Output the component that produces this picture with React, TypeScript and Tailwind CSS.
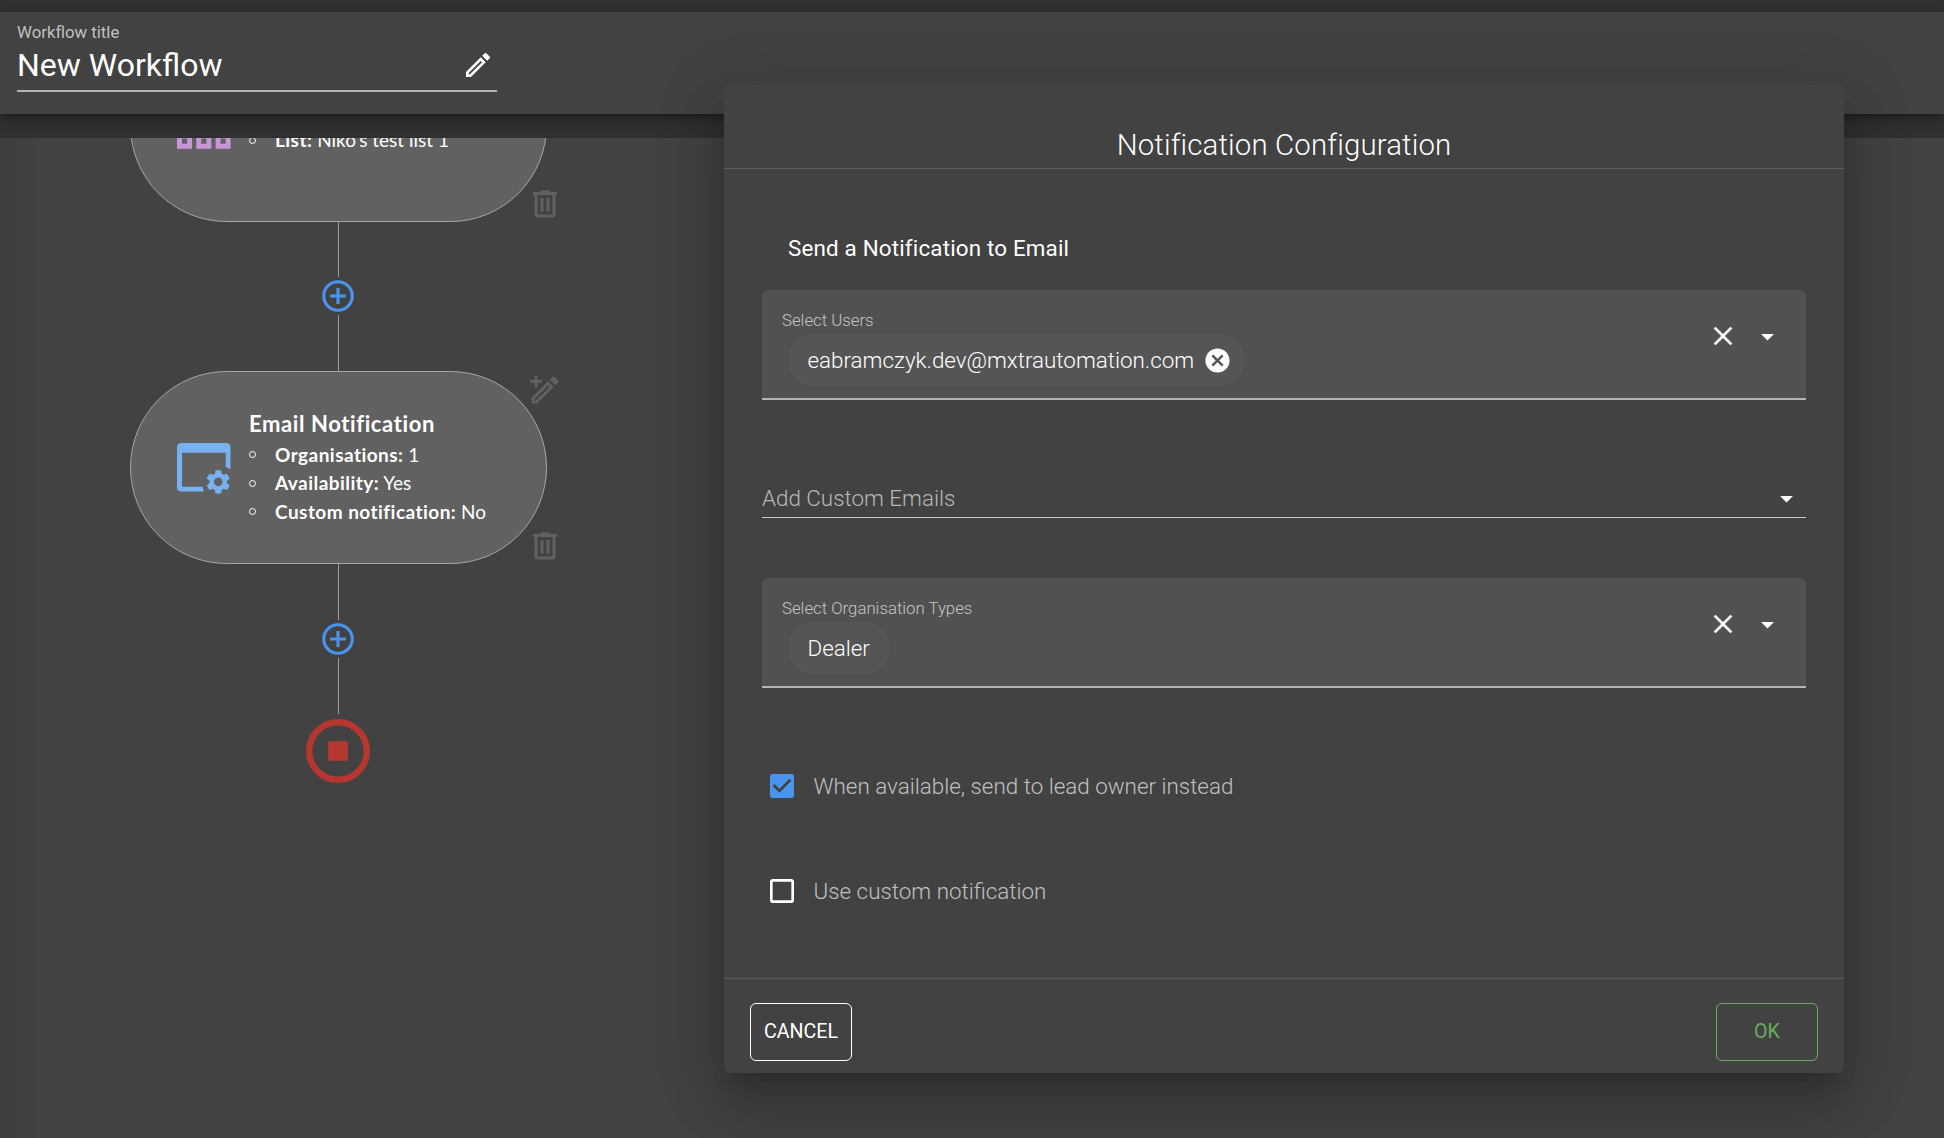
import type { ReactNode } from "react";

const ICONS = {
  pencil:
    "M14.06,9L15,9.94L5.92,19H5V18.08L14.06,9M17.66,3C17.41,3 17.15,3.1 16.96,3.29L15.13,5.12L18.88,8.87L20.71,7.04C21.1,6.65 21.1,6 20.71,5.63L18.37,3.29C18.17,3.09 17.92,3 17.66,3M14.06,6.19L3,17.25V21H6.75L17.81,9.94L14.06,6.19Z",
  trash:
    "M9,3V4H4V6H5V19A2,2 0 0,0 7,21H17A2,2 0 0,0 19,19V6H20V4H15V3H9M7,6H17V19H7V6M9,8V17H11V8H9M13,8V17H15V8H13Z",
  plusCircle:
    "M12,20C7.59,20 4,16.41 4,12C4,7.59 7.59,4 12,4C16.41,4 20,7.59 20,12C20,16.41 16.41,20 12,20M12,2A10,10 0 0,0 2,12A10,10 0 0,0 12,22A10,10 0 0,0 22,12A10,10 0 0,0 12,2M13,7H11V11H7V13H11V17H13V13H17V11H13V7Z",
  caret: "M7,10L12,15L17,10H7Z",
  close:
    "M19,6.41L17.59,5L12,10.59L6.41,5L5,6.41L10.59,12L5,17.59L6.41,19L12,13.41L17.59,19L19,17.59L13.41,12L19,6.41Z",
  closeCircle:
    "M12,2C17.53,2 22,6.47 22,12C22,17.53 17.53,22 12,22C6.47,22 2,17.53 2,12C2,6.47 6.47,2 12,2M15.59,7L12,10.59L8.41,7L7,8.41L10.59,12L7,15.59L8.41,17L12,13.41L15.59,17L17,15.59L13.41,12L17,8.41L15.59,7Z",
  checked:
    "M10,17L5,12L6.41,10.58L10,14.17L17.59,6.58L19,8M19,3H5C3.89,3 3,3.89 3,5V19A2,2 0 0,0 5,21H19A2,2 0 0,0 21,19V5C21,3.89 20.1,3 19,3Z",
  unchecked:
    "M19,3H5C3.89,3 3,3.89 3,5V19A2,2 0 0,0 5,21H19A2,2 0 0,0 21,19V5C21,3.89 20.1,3 19,3M19,5V19H5V5H19Z",
};

function Icon({ name, className }: { name: keyof typeof ICONS; className: string }) {
  return (
    <svg viewBox="0 0 24 24" fill="currentColor" className={`shrink-0 ${className}`}>
      <path d={ICONS[name]} />
    </svg>
  );
}

function PencilPlus({ className }: { className: string }) {
  return (
    <svg viewBox="0 0 24 24" fill="currentColor" className={className}>
      <path d={ICONS.pencil} />
      <path d="M5,2.2H7V5.2H10V7.2H7V10.2H5V7.2H2V5.2H5Z" />
    </svg>
  );
}

function WindowCog() {
  return (
    <svg viewBox="0 0 54 51" className="mt-[2px] h-[51px] w-[54px] shrink-0 text-[#78b1f0]" fill="currentColor">
      <path d="M4.5,0H49Q53.5,0 53.5,4.5V26.3L48.7,24V9.7H5V43.7H25.5L27,48.5H4.5Q0,48.5 0,44V4.5Q0,0 4.5,0Z" />
      <g transform="translate(26.6 24.2) scale(1.22)">
        <path d="M19.14 12.94c.04-.3.06-.61.06-.94 0-.32-.02-.64-.07-.94l2.03-1.58c.18-.14.23-.41.12-.61l-1.92-3.32c-.12-.22-.37-.29-.59-.22l-2.39.96c-.5-.38-1.03-.7-1.62-.94L14.4 2.81c-.04-.24-.24-.41-.48-.41h-3.84c-.24 0-.43.17-.47.41l-.36 2.54c-.59.24-1.13.57-1.62.94l-2.39-.96c-.22-.08-.47 0-.59.22L2.74 8.87c-.12.21-.08.47.12.61l2.03 1.58c-.05.3-.09.63-.09.94s.02.64.07.94l-2.03 1.58c-.18.14-.23.41-.12.61l1.92 3.32c.12.22.37.29.59.22l2.39-.96c.5.38 1.03.7 1.62.94l.36 2.54c.05.24.24.41.48.41h3.84c.24 0 .44-.17.47-.41l.36-2.54c.59-.24 1.13-.56 1.62-.94l2.39.96c.22.08.47 0 .59-.22l1.92-3.32c.12-.22.07-.47-.12-.61l-2.01-1.58zM12 15.6c-1.98 0-3.6-1.62-3.6-3.6s1.62-3.6 3.6-3.6 3.6 1.62 3.6 3.6-1.62 3.6-3.6 3.6z" />
      </g>
    </svg>
  );
}

function ListBoxes() {
  return (
    <svg viewBox="0 0 54 51" className="h-[51px] w-[54px] shrink-0 text-[#c796d6]" fill="currentColor">
      <path
        fillRule="evenodd"
        d="M0,0H53.5V10H0Z M0,15H15V48.7H0Z M5,38.6V43.8H10.2V38.6Z M19.3,15H34.3V48.7H19.3Z M24.2,38.6V43.8H29.4V38.6Z M38.6,15H53.6V48.7H38.6Z M43.5,38.6V43.8H48.7V38.6Z"
      />
    </svg>
  );
}

type Detail = { label: string; value: string };

function StepCard({ title, details, icon, editable }: { title?: string; details: Detail[]; icon: ReactNode; editable?: boolean }) {
  return (
    <div className="relative flex h-[193px] w-[417px] shrink-0 items-center rounded-full border border-[#a6a6a6] bg-[#616161] pl-[46px] font-[Lato,sans-serif] text-white">
      {icon}
      <div className={title ? "ml-[18px] flex flex-col pb-[2px]" : "ml-[18px] flex flex-col pt-[29px]"}>
        {title && <div className="h-[33px] text-[22px] leading-[33px] font-bold tracking-[0.6px]">{title}</div>}
        <ul className="flex flex-col">
          {details.map((d) => (
            <li key={d.label} className="flex h-[28.5px] items-center text-[19px] leading-[28px] whitespace-nowrap">
              <span className="mr-[19px] size-[7px] rounded-full border border-white" />
              <span>
                <b className="font-bold tracking-[0.46px]">{d.label}</b> {d.value}
              </span>
            </li>
          ))}
        </ul>
      </div>
      {editable && <PencilPlus className="absolute top-[0px] left-[396px] size-9 text-[#616161]" />}
      <Icon name="trash" className="absolute top-[155.5px] left-[395.5px] size-9 text-[#616161]" />
    </div>
  );
}

function Line({ className }: { className: string }) {
  return <div className={`w-px shrink-0 bg-[#999] ${className}`} />;
}

function Chip({ children }: { children: ReactNode }) {
  return (
    <div className="ml-[6px] flex h-[52px] w-fit items-center rounded-full bg-[#555] pr-[20px] pl-[19.5px] text-[22.4px] leading-[28px] font-light text-white">
      {children}
    </div>
  );
}

function SelectField({ label, children, className }: { label: string; children: ReactNode; className: string }) {
  return (
    <div className={`flex h-[110px] justify-between rounded-t-[6px] border-b-2 border-[#b4b4b4] bg-[#515151] pl-5 ${className}`}>
      <div>
        <div className="mt-[20px] h-[24px] text-[16.8px] leading-[20px] font-light text-[#c6c6c6]">{label}</div>
        {children}
      </div>
      <div className="mt-[30px] mr-[23px] flex h-[32px] items-center gap-[13.5px] text-white">
        <Icon name="close" className="size-8" />
        <Icon name="caret" className="size-[31px]" />
      </div>
    </div>
  );
}

function CheckRow({ checked, label, className }: { checked?: boolean; label: string; className: string }) {
  return (
    <label className={`flex h-8 items-center ${className}`}>
      <Icon name={checked ? "checked" : "unchecked"} className={checked ? "size-8 text-[#4994ec]" : "size-8 text-white"} />
      <span className="ml-4 text-[22.4px] leading-8 font-light text-[#c0c0c0]">{label}</span>
    </label>
  );
}

function ConfigDialog() {
  return (
    <section className="absolute top-[85px] left-[724px] flex h-[988px] w-[1120px] flex-col rounded-[6px] bg-[#424242] shadow-[0_15px_21px_-10px_rgba(0,0,0,0.2),0_34px_53px_4px_rgba(0,0,0,0.14),0_13px_64px_11px_rgba(0,0,0,0.12)]">
      <h2 className="h-[84px] border-b border-[#5c5c5c] pt-[40px] text-center text-[29.4px] leading-[41px] font-light tracking-[0.15px] text-white">
        Notification Configuration
      </h2>
      <div className="flex flex-1 flex-col px-[38px]">
        <h3 className="mt-[63px] h-[57px] pl-[26px] text-[22.4px] leading-[32px] tracking-[0.17px] text-white">
          Send a Notification to Email
        </h3>
        <SelectField label="Select Users" className="mt-[1px]">
          <Chip>
            eabramczyk.dev@mxtrautomation.com
            <Icon name="closeCircle" className="-mr-[7px] ml-[9px] size-[29px]" />
          </Chip>
        </SelectField>
        <div className="mt-[79px] flex h-[39px] items-center justify-between border-b border-[#c8c8c8] pr-[4px]">
          <span className="text-[22.4px] leading-8 font-light text-[#b8b8b8]">Add Custom Emails</span>
          <Icon name="caret" className="size-[31px] text-white" />
        </div>
        <SelectField label="Select Organisation Types" className="mt-[60px]">
          <Chip>Dealer</Chip>
        </SelectField>
        <CheckRow checked label="When available, send to lead owner instead" className="mt-[82px] ml-[3.5px]" />
        <CheckRow label="Use custom notification" className="mt-[73px] ml-[3.5px]" />
      </div>
      <div className="flex h-[95px] justify-between border-t border-[#5c5c5c] px-[26px] pt-[24px] text-[19.6px]">
        <button className="h-[58px] w-[102px] rounded-[6px] border border-white text-white">CANCEL</button>
        <button className="h-[58px] w-[102px] rounded-[6px] border border-[#68ad5c] text-[#68ad5c]">OK</button>
      </div>
    </section>
  );
}

export default function App() {
  return (
    <div className="relative flex h-[1138px] w-[1944px] flex-col overflow-hidden bg-[#303030] font-[Roboto,sans-serif]">
      <div className="h-3 shrink-0" />
      <header className="relative h-[102px] shrink-0 bg-[#424242] px-[17px] shadow-[0_3px_6px_-1px_rgba(0,0,0,0.3),0_6px_12px_rgba(0,0,0,0.2)]">
        <div className="w-[480px] border-b-2 border-[#b4b4b4] pt-[10px]">
          <div className="h-[20px] text-[16.8px] leading-[20px] text-[#c0c0c0]">Workflow title</div>
          <div className="flex h-[48px] items-center justify-between pr-[3px] pb-[2px]">
            <span className="text-[32px] leading-[40px] text-white">New Workflow</span>
            <Icon name="pencil" className="size-8 text-white" />
          </div>
        </div>
      </header>
      <main className="mt-6 flex min-h-0 flex-1 flex-col overflow-hidden bg-[#424242] bg-linear-to-r from-black/8 via-transparent via-[2%] to-transparent">
        <div className="-mt-[109px] ml-[130px] flex w-[417px] flex-col items-center self-start">
          <StepCard icon={<ListBoxes />} details={[{ label: "List:", value: "Niko’s test list 1" }]} />
          <Line className="h-[55px]" />
          <Icon name="plusCircle" className="mr-px size-[38px] text-[#4994ec]" />
          <Line className="h-[56px]" />
          <StepCard
            title="Email Notification"
            editable
            icon={<WindowCog />}
            details={[
              { label: "Organisations:", value: "1" },
              { label: "Availability:", value: "Yes" },
              { label: "Custom notification:", value: "No" },
            ]}
          />
          <Line className="h-[56px]" />
          <Icon name="plusCircle" className="mr-px size-[38px] text-[#4994ec]" />
          <Line className="h-[56px]" />
          <svg viewBox="0 0 64 64" className="mt-[5px] mr-px size-16 shrink-0 text-[#b6372f]">
            <circle cx="32" cy="32" r="28.8" fill="none" stroke="currentColor" strokeWidth="6.4" />
            <rect x="22.2" y="22.2" width="19.6" height="19.6" fill="currentColor" />
          </svg>
        </div>
      </main>
      <ConfigDialog />
    </div>
  );
}
